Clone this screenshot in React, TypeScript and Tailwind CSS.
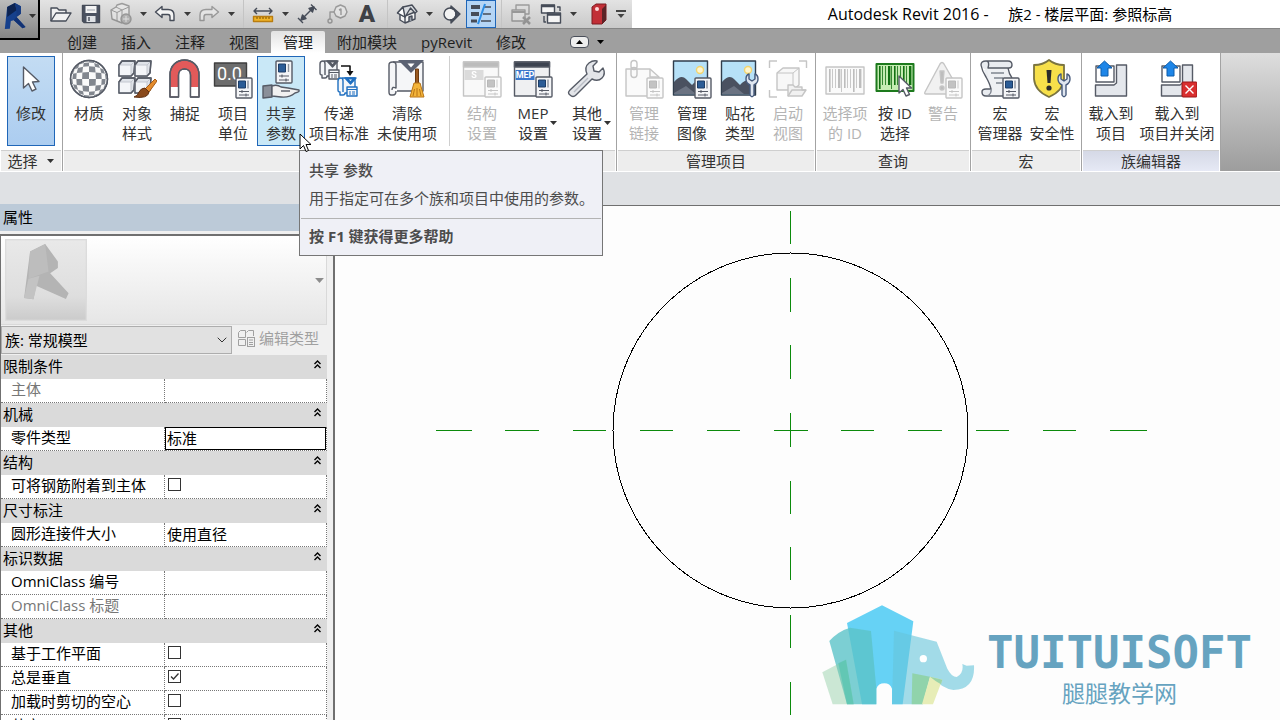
import React from 'react';
import clsx from 'clsx';
import { ChevronDown } from 'lucide-react';

interface IconProps {
  children: React.ReactNode;
  muted?: boolean;
}

const LINE = '#565b66';

/** 功能区大图标画布 40x40 */
const Big: React.FC<IconProps> = ({ children, muted }) => (
  <svg
    width="40"
    height="40"
    viewBox="0 0 40 40"
    fill="none"
    stroke={LINE}
    strokeWidth="1.4"
    strokeLinejoin="round"
    className={clsx('shrink-0', muted && 'opacity-35 grayscale')}
    aria-hidden="true"
  >
    {children}
  </svg>
);

/** 快速访问工具栏图标画布 24x24 */
const Small: React.FC<IconProps> = ({ children, muted }) => (
  <svg
    width="24"
    height="24"
    viewBox="0 0 24 24"
    fill="none"
    stroke="#464c58"
    strokeWidth="1.4"
    strokeLinejoin="round"
    className={clsx('shrink-0', muted && 'opacity-45 grayscale')}
    aria-hidden="true"
  >
    {children}
  </svg>
);

// 右下角的属性小面板
const Sheet: React.FC<{ x?: number; y?: number }> = ({ x = 23, y = 19 }) => (
  <g transform={`translate(${x} ${y})`}>
    <rect x="0" y="0" width="16" height="20" rx="1" fill="#f4f5f7" />
    <rect x="2.500" y="3" width="7" height="7" fill="#2b5c96" stroke="#1d3d66" strokeWidth="1" />
    <path d="M12 2.500v8" stroke="#8d939c" />
    <path d="M3 13.500h10M3 17h10M6 12v3M10 15.500v3" strokeWidth="1" />
  </g>
);

const SmallWrench = () => (
  <path
    transform="translate(26 15)"
    d="M4 21V11Q0 9 0 5Q0 1 3 0V5L6 7L9 5V0Q12 1 12 5Q12 9 8 11V21Q6 24.500 4 21Z"
    fill="#dfe6f0"
    stroke="#465a7c"
  />
);

// 棋盘格球体的网格点
const spherePoint = (i: number, j: number) => {
  const u = Math.sin(((i / 4 - 1) * Math.PI) / 2);
  const v = Math.sin(((j / 4 - 1) * Math.PI) / 2);
  const x = 20 + 18 * u * Math.sqrt(1 - (v * v) / 2);
  const y = 20 + 18 * v * Math.sqrt(1 - (u * u) / 2);
  return `${x.toFixed(1)},${y.toFixed(1)}`;
};

const sphereCells = Array.from({ length: 64 }, (_, n) => [n % 8, Math.floor(n / 8)])
  .filter(([i, j]) => (i + j) % 2 === 0)
  .map(([i, j]) =>
    [spherePoint(i, j), spherePoint(i + 1, j), spherePoint(i + 1, j + 1), spherePoint(i, j + 1)].join(' ')
  );

const CursorIcon = () => (
  <Big>
    <path d="M12.500 8V29L17.500 24.500L21 32L25 30.200L21.500 23L28 22.500Z" fill="#fff" />
  </Big>
);

const MaterialIcon = () => (
  <Big>
    <circle cx="20" cy="20" r="18.500" fill="#fafafa" />
    {sphereCells.map((points) => (
      <polygon key={points} points={points} fill="#82878f" stroke="none" />
    ))}
    <circle cx="20" cy="20" r="18.500" />
  </Big>
);

const StyleIcon = () => (
  <Big>
    {[[2, 2], [18, 2], [2, 19], [18, 19]].map(([x, y]) => (
      <g key={`${x}-${y}`} transform={`translate(${x} ${y})`}>
        <path d="M0 4L3 0H16L15 12L12 15H0Z" fill="#dfe3e9" />
        <path d="M0 4H12V15H0Z" fill="#f3f5f8" stroke="#c3c7cf" strokeWidth="1" />
        <path d="M12 4L16 0" stroke="#c3c7cf" strokeWidth="1" />
        <path d="M0 4L3 0H16L15 12L12 15H0Z" />
      </g>
    ))}
    <path d="M28 30L38 20L40 22L32 33Z" fill="#e38b2c" stroke="#a65b16" strokeWidth="1" />
    <path d="M17 38Q21 37 22 33Q24 29 28 29L32 33Q31 40 17 38Z" fill="#8a4a1c" stroke="#5f2f10" strokeWidth="1" />
  </Big>
);

const MagnetIcon = () => (
  <Big>
    <path d="M5 38V16C5 -4 34 -4 34 16V38H25.500V16C25.500 8 13.500 8 13.500 16V38Z" fill="#e25a5a" />
    <path d="M5.700 28H13V37.300H5.700ZM26 28H33.300V37.300H26Z" fill="#fff" stroke="none" />
    <path d="M5 38V16C5 -4 34 -4 34 16V38H25.500V16C25.500 8 13.500 8 13.500 16V38Z" />
  </Big>
);

const UnitsIcon = () => (
  <Big>
    <rect x="1.500" y="4" width="32" height="23" fill="#6d6d6d" stroke="#3f3f3f" />
    <text x="4" y="21" fontSize="18" fill="#fff" stroke="none" fontFamily="Roboto, sans-serif">
      0.0
    </text>
    <Sheet />
  </Big>
);

const ShareIcon = () => (
  <Big>
    <g transform="translate(15 2)">
      <rect width="16" height="22" rx="1" fill="#f4f5f7" />
      <rect x="2.500" y="3" width="7" height="8" fill="#2b5c96" stroke="#1d3d66" strokeWidth="1" />
      <path d="M12.500 3v8" stroke="#8d939c" />
      <path d="M3 15h10M3 19h10M6 13.500v3M10 17.500v3" strokeWidth="1.100" />
    </g>
    <path d="M2 27L11 26V38L2 39Z" fill="#8a8f99" />
    <path d="M11 27Q16 25 20 28L27 29L38 31Q39 33 34 34Q28 39 20 38L11 37Z" fill="#f1f1f1" />
    <path d="M20 32H29" />
  </Big>
);

const Scroll: React.FC<{ color?: string }> = ({ color = LINE }) => (
  <g stroke={color} fill="#f4f6f9">
    <path d="M5 2H18V17H8V17Q8 19 6 19H3V16Q1 16 1 14V5Q1 2 4 2Q6 2 6 5V16" />
    <path d="M8 2H19L13.500 8Z" fill={color} />
    <path d="M12 3.500H15L13.500 5Z" fill="#fff" stroke="none" />
    <rect x="10" y="11" width="10" height="9" />
    <path d="M10 13.500H20M12 16H14M15 16H18M12 18H14M15 18H18" strokeWidth="1" />
  </g>
);

const TransferIcon = () => (
  <Big>
    <Scroll />
    <g transform="translate(18 17)">
      <Scroll color="#1f6fc0" />
    </g>
    <path d="M22 7H31V13" stroke="#111" strokeWidth="1.600" />
    <path d="M27.500 12H34.500L31 17Z" fill="#111" stroke="none" />
  </Big>
);

const PurgeIcon = () => (
  <Big>
    <path d="M6 3H36V32H10" fill="#f5f6f8" />
    <path d="M9 32Q9 36 6 36H4Q2 36 2 33V6Q2 3 5.500 3Q9 3 9 6V29Q5 27 5 31" fill="#f5f6f8" />
    <path d="M11 1H37L24 14Z" fill="#5a6172" stroke="none" />
    <path d="M20.500 4.500H27.500L24 8.500Z" fill="#fff" stroke="none" />
    <path d="M28.500 10H31.500V25H28.500Z" fill="#9a5a22" stroke="#6d3b12" strokeWidth="1" />
    <path d="M27 24H33L37 38H23Z" fill="#f3b43a" stroke="#b87516" strokeWidth="1" />
    <path d="M27.500 30L26 37M30 29V37M32.500 30L34 37" stroke="#b87516" strokeWidth="1" />
  </Big>
);

const SettingsWindow: React.FC<{ tag: string; muted?: boolean }> = ({ tag, muted }) => (
  <Big muted={muted}>
    <rect x="1.500" y="3" width="35" height="34" fill="#eff0f2" />
    <rect x="1.500" y="3" width="35" height="5" fill="#3c4350" />
    <rect x="2.500" y="11" width="19" height="10" fill={muted ? '#9b9b9b' : '#3b78cc'} stroke="none" />
    <text
      x="12"
      y="19"
      fontSize="9"
      fontWeight="700"
      textAnchor="middle"
      fill="#fff"
      stroke="none"
      fontFamily="Roboto, sans-serif"
    >
      {tag}
    </text>
    <Sheet x={23} y={18} />
  </Big>
);

const WrenchIcon = () => (
  <Big>
    <path
      d="M3 31L20 15Q17 8 22 4Q26 1 30 2V3L26 7L27 12L32 13L36 9Q39 15 35 19Q31 23 25 20L9 36Q6 39 3 36Q0 34 3 31Z"
      fill="#e3e5e9"
    />
    <path d="M7 33L21 19" stroke="#b9bdc5" />
  </Big>
);

const LinkIcon = () => (
  <Big muted>
    <path d="M2 10H26L35 18V37H2Z" fill="#f2f2f2" />
    <path d="M26 10V18H35" />
    <rect x="7" y="1.500" width="6" height="9" rx="3" />
    <rect x="7" y="8.500" width="6" height="10" rx="3" />
    <Sheet />
  </Big>
);

const Landscape = () => (
  <>
    <rect x="1.500" y="2" width="34" height="34" fill="#b6e1f8" stroke="#2f3d4c" />
    <path d="M2 23Q9 15 14 20L20 26Q27 18 35 23V35H2Z" fill="#4a5160" stroke="none" />
    <path d="M2 34L14 27L24 35H2Z" fill="#6b7382" stroke="none" />
    <circle cx="28" cy="11" r="3.500" fill="#fff6cf" stroke="#f3d56f" />
  </>
);

const ImageIcon = () => (
  <Big>
    <Landscape />
    <Sheet />
  </Big>
);

const DecalIcon = () => (
  <Big>
    <Landscape />
    <SmallWrench />
  </Big>
);

const LaunchViewIcon = () => (
  <Big muted>
    <path d="M1.500 9V2H9M31 2H38.500V9M1.500 31V38H9" />
    <path d="M9 14L15 9H31V26L25 31H9Z" fill="#e9e9e9" />
    <path d="M9 14H25V31M25 14L31 9" strokeWidth="1" />
    <path d="M20 37V26H25L27 28H34V31H38L34 37Z" fill="#d9d9d9" />
    <path d="M20 37L24 31H38" />
  </Big>
);

const barWidths = [2, 1, 1, 3, 1, 2, 1, 1, 2, 1, 3];
const Bars: React.FC<{ color: string; y: number }> = ({ color, y }) => (
  <>
    {barWidths.map((w, i) => (
      <rect
        key={i}
        x={4 + i * 3}
        y={y}
        width={w * 0.8}
        height={i === 0 || i === 4 || i === 8 ? 23 : 19}
        fill={color}
        stroke="none"
      />
    ))}
  </>
);

const SelectIdsIcon = () => (
  <Big muted>
    <rect x="1" y="8" width="38" height="27" fill="#f1f1f1" />
    <Bars color="#444" y={10} />
  </Big>
);

const PickIdIcon = () => (
  <Big>
    <rect x="1.500" y="5" width="37" height="27" fill="#c5ecb2" stroke="#1d7a1d" strokeWidth="2" />
    <Bars color="#137013" y={7} />
    <path d="M24 17V34L28 30.500L31 37L34.500 35.500L31.500 29H36.500Z" fill="#fff" />
  </Big>
);

const WarningIcon = () => (
  <Big muted>
    <path d="M17 5Q19 2 21 5L37 33Q38 35 36 35H3Q1 35 2 33Z" fill="#d9d9d9" />
    <path d="M17 12H21L20 24H18Z" fill="#444" />
    <circle cx="19" cy="29" r="2" fill="#444" />
    <Sheet />
  </Big>
);

const MacroManagerIcon = () => (
  <Big>
    <path
      d="M5 2H28Q32 2 32 6Q32 9 29 9H13L20 26H30V37H5Q2 37 2 33Q2 30 5 30H10L4 11H6Q1 8 1 5Q1 2 5 2Z"
      fill="#e9ecf0"
      stroke="none"
    />
    <path d="M7 9H29V12L33 30V37H8Q11 36 11 32Q11 29 9 22Z" fill="#eef0f3" stroke="none" />
    <path d="M6 2H28Q32 2 32 6Q32 9 29 9H8Q10 2 6 2Q1 2 1 6Q2 12 6 18Q10 25 11 30H6Q2 30 2 33Q2 37 6 37H24M28 9Q29 15 32 19" />
    <path d="M11 14H24M14 19H23M16 24H22M11 30Q12 35 7 37" stroke="#7f8590" />
    <Sheet />
  </Big>
);

const MacroSecurityIcon = () => (
  <Big>
    <path d="M17 1Q23 6 32 6V20Q31 32 17 38Q3 32 2 20V6Q11 6 17 1Z" fill="#f7e04a" stroke="#7a7440" strokeWidth="1.800" />
    <path d="M14.500 11H19.500L18.500 24H15.500Z" fill="#2b2b2b" stroke="none" />
    <circle cx="17" cy="29" r="2.600" fill="#2b2b2b" stroke="none" />
    <SmallWrench />
  </Big>
);

const LoadShape: React.FC<{ closing?: boolean }> = ({ closing }) => (
  <Big>
    <path d="M5 7H23V23H5Z" fill="#fff" />
    <path d="M25.500 6H35.500V37H4.500V26H23L25.500 24Z" fill="#e4e7ec" />
    <path d="M13.500 2L21 9H17V17H10V9H6Z" fill="#1e86e8" stroke="#0d5cab" strokeWidth="1" />
    {closing && (
      <>
        <rect x="25" y="23" width="15" height="15" rx="1" fill="#d92f2f" stroke="#9c1919" strokeWidth="1" />
        <path d="M28.500 26.500L36.500 34.500M36.500 26.500L28.500 34.500" stroke="#fff" />
      </>
    )}
  </Big>
);

const Caret: React.FC<{ className?: string }> = ({ className }) => (
  <svg width="7" height="4" viewBox="0 0 7 4" className={className} aria-hidden="true">
    <path d="M0 0H7L3.500 4Z" fill="currentColor" />
  </svg>
);

interface ToolProps {
  icon: React.ReactNode;
  lines: string[];
  width?: string;
  disabled?: boolean;
  active?: string;
  menu?: boolean;
}

const Tool: React.FC<ToolProps> = ({ icon, lines, width = 'w-12', disabled, active, menu }) => (
  <button
    disabled={disabled}
    className={clsx(
      'flex h-[90px] shrink-0 flex-col items-center gap-1 border pt-0.5 leading-5',
      width,
      active ?? 'border-transparent',
      disabled ? 'text-[#b4b4b4]' : 'text-[#333]'
    )}
  >
    {icon}
    <span className={clsx('flex items-center gap-0.5 whitespace-nowrap', menu && 'pl-[9px]')}>
      <span>
        {lines.map((line) => (
          <span key={line} className="block">
            {line}
          </span>
        ))}
      </span>
      {menu && <Caret />}
    </span>
  </button>
);

interface PanelProps {
  title: string;
  children: React.ReactNode;
  padding?: string;
  tinted?: boolean;
  menu?: boolean;
}

const Panel: React.FC<PanelProps> = ({ title, children, padding = 'px-[3px]', tinted, menu }) => (
  <section className="flex shrink-0 flex-col border-r border-[#a3a3a3] bg-white">
    <div className={clsx('flex flex-1 pt-[3px]', padding)}>{children}</div>
    <h2
      className={clsx(
        'mx-px flex h-[21px] items-center justify-center gap-2 border-t border-[#cfcfcf] text-[#333]',
        tinted ? 'bg-linear-to-b from-[#d5d9e6] to-[#e6e9f5]' : 'bg-[#ededed]'
      )}
    >
      {title}
      {menu && <Caret className="w-[9px]" />}
    </h2>
  </section>
);

const Quick: React.FC<{ label: string; children: React.ReactNode; active?: boolean }> = ({
  label,
  children,
  active,
}) => (
  <button
    aria-label={label}
    className={clsx(
      'flex h-7 w-[30px] shrink-0 items-center justify-center',
      active && 'border border-[#1f66b8] bg-[#b5d5f5]'
    )}
  >
    {children}
  </button>
);

const QuickMenu: React.FC<{ label: string }> = ({ label }) => (
  <button aria-label={label} className="flex h-7 w-3.5 shrink-0 items-center justify-center text-[#3b3b3b]">
    <Caret />
  </button>
);

const QuickDivider = () => (
  <div className="flex h-7 w-2.5 shrink-0 justify-center">
    <div className="w-px bg-[#c4c4c4]" />
  </div>
);

const QuickAccess = () => (
  <div className="flex h-7 shrink-0 items-center bg-linear-to-b from-[#e3e3e3] to-[#c9c9c9] pr-1 pl-1.5">
    <Quick label="打开">
      <Small>
        <path d="M2 19V6H8L10 8H17V11" fill="#f1f1f1" />
        <path d="M2 19L7 11H22L17 19Z" fill="#f1f1f1" />
      </Small>
    </Quick>
    <Quick label="保存">
      <Small>
        <path d="M3.500 3.500H20.500V20.500H5L3.500 19Z" fill="#4b5261" />
        <rect x="6.500" y="4" width="11" height="7" fill="#f4f4f4" stroke="none" />
        <path d="M8 8H16" stroke="#9aa0aa" strokeWidth="1" />
        <rect x="7.500" y="14" width="9" height="6" fill="#dfe2e6" stroke="none" />
        <path d="M10 15V19" />
      </Small>
    </Quick>
    <Quick label="同步">
      <Small muted>
        <path d="M2 8L7 5L8 3L13 1.500L20 4V14L13 21L3 17Z" fill="#f0f0f0" />
        <path d="M2 8L8 10.500L13 8L20 5M8 10.500V19M13 8V19M7 5L13 8" strokeWidth="1" />
        <circle cx="17" cy="17" r="5" fill="#888" />
        <path d="M14 17H20M17 14V20" stroke="#eee" strokeWidth="1" />
      </Small>
    </Quick>
    <QuickMenu label="同步选项" />
    <Quick label="放弃">
      <Small>
        <path d="M9 4.500L2.500 10L9 15.500V12.500H15Q17 12.500 17 15V18.500H21V13Q21 7.500 15 7.500H9Z" fill="#f4f4f4" />
      </Small>
    </Quick>
    <QuickMenu label="放弃列表" />
    <Quick label="重做">
      <Small muted>
        <path d="M15 4.500L21.500 10L15 15.500V12.500H9Q7 12.500 7 15V18.500H3V13Q3 7.500 9 7.500H15Z" fill="#f4f4f4" />
      </Small>
    </Quick>
    <QuickMenu label="重做列表" />
    <QuickDivider />
    <Quick label="测量">
      <Small>
        <path d="M3 9H21M6 6L3 9L6 12M18 6L21 9L18 12" />
        <rect x="2.500" y="14.500" width="19" height="5" fill="#f0b429" stroke="#b97d10" />
        <path d="M6 15V17M9 15V17M12 15V17M15 15V17M18 15V17" stroke="#7a4f00" strokeWidth="1" />
      </Small>
    </Quick>
    <QuickMenu label="测量选项" />
    <Quick label="对齐尺寸标注">
      <Small>
        <path d="M7 17L18 6" />
        <path d="M6 18L7.500 13L11 16.500ZM19 5L17.500 10L14 6.500Z" fill="#464c58" />
        <path d="M3 16L8 21M16 2.500L21.500 8" />
      </Small>
    </Quick>
    <Quick label="按类别标记">
      <Small muted>
        <path d="M11 5L15.500 3L20 5L22 10L20 14L15.500 16L11 14L9 10Z" fill="#eee" />
        <path d="M14 8L16 7V13M9 10H5V17" />
        <circle cx="5" cy="19" r="2" />
      </Small>
    </Quick>
    <Quick label="文字">
      <span className="font-['Roboto',sans-serif] text-[24px] leading-6 font-black text-[#3f4146]">A</span>
    </Quick>
    <QuickDivider />
    <Quick label="默认三维视图">
      <Small>
        <path d="M5 11L10 14V21L5 18ZM10 14L20 10V17L10 21Z" fill="#f3f3f3" />
        <path d="M2.500 11L8 5L17 3L22 9.500L20 11L15.500 6L10 15Z" fill="#d9dce0" />
        <path d="M2.500 11L8 5L10 15Z" fill="#fff" />
        <path d="M14 19.500V15L17 14V18.500" fill="#9aa0aa" />
      </Small>
    </Quick>
    <QuickMenu label="三维视图选项" />
    <Quick label="剖面">
      <Small>
        <path d="M12 4L21 12L12 21Z" fill="#4b5261" />
        <circle cx="11" cy="12" r="6" fill="#f3f3f3" />
        <path d="M11 6A6 6 0 0 1 11 18" />
      </Small>
    </Quick>
    <Quick label="细线" active>
      <Small>
        <path d="M2 5H11M2 12H10" strokeWidth="4" />
        <path d="M2 19H8" strokeWidth="3" />
        <path d="M15 5H22M14 12H22M12 19H22" strokeWidth="1.500" />
        <path d="M16 2L9 22" stroke="#2b8de6" strokeWidth="2" />
      </Small>
    </Quick>
    <QuickDivider />
    <Quick label="关闭隐藏窗口">
      <Small muted>
        <path d="M7 8V3H20V12H16" />
        <path d="M3 8H16V19H3Z" fill="#e8e8e8" />
        <path d="M3 10H16" strokeWidth="2" />
        <path d="M14 15L21 22M21 15L14 22" strokeWidth="2.500" />
      </Small>
    </Quick>
    <Quick label="切换窗口">
      <Small>
        <rect x="2.500" y="3" width="13" height="8" fill="#f5f5f5" />
        <rect x="8.500" y="11" width="13" height="10" fill="#f5f5f5" />
        <path d="M2 4H16M8 12.500H22" strokeWidth="2.500" />
        <path d="M18 5H21V9M5 14V20H7" />
      </Small>
    </Quick>
    <QuickMenu label="窗口列表" />
    <div className="w-1" />
    <Quick label="插件">
      <Small>
        <path d="M5 5L9 2H19V18L15 22H5Z" fill="#c22f37" stroke="#7c1d23" strokeWidth="1" />
        <path d="M15 7L19 3V18L15 22Z" fill="#5c2327" stroke="none" />
        <circle cx="10" cy="7" r="2" fill="#ffd9d9" stroke="none" />
      </Small>
    </Quick>
    <button aria-label="自定义快速访问工具栏" className="flex h-7 w-3.5 flex-col items-center justify-center gap-0.5 text-[#444]">
      <span className="h-0.5 w-2.5 bg-[#444]" />
      <Caret className="w-2.5" />
    </button>
  </div>
);

const tabs = ['创建', '插入', '注释', '视图', '管理', '附加模块', 'pyRevit', '修改'];

const Header = () => (
  <header className="flex shrink-0 bg-[#9f9f9f]">
    <button
      aria-label="应用程序菜单"
      className="flex size-10 shrink-0 items-center justify-between border-r-2 border-b-2 border-black bg-linear-to-b from-[#bcbcbc] to-[#858585] pr-0.5 pb-1.5 pl-1 text-[#333]"
    >
      <svg width="23" height="28" viewBox="13 5 68 84" aria-hidden="true">
        <path d="M22 20L45 8L63 18V40L50 50L77 80L68 84L42 60L33 62L30 85L15 86Z" fill="#16408c" />
        <path d="M22 20L45 8L50 30L22 50Z" fill="#0d2350" />
        <path d="M45 8L63 18V40L50 50L50 30Z" fill="#153a80" />
        <path d="M42 60L50 50L77 80L68 84Z" fill="#123274" />
      </svg>
      <Caret />
    </button>
    <div className="flex min-w-0 flex-1 flex-col">
      <div className="flex bg-white">
        <QuickAccess />
        <h1 className="flex flex-1 items-center justify-center pr-[26px] pl-[114px] whitespace-pre text-black">
          <span className="text-base">Autodesk Revit 2016 -</span>
          {'     族2 - 楼层平面: 参照标高'}
        </h1>
      </div>
      <nav className="flex h-[25px] items-end border-t border-[#858585] pl-[15px]">
        {tabs.map((tab) => (
          <button
            key={tab}
            className={clsx(
              'h-[22px] px-3 leading-[22px] text-[#1e1e1e]',
              tab === '管理' && 'rounded-t-xs bg-linear-to-b from-[#e3e3e3] to-white'
            )}
          >
            {tab}
          </button>
        ))}
        <button aria-label="最小化功能区" className="ml-8 flex h-[22px] items-center gap-2 text-black">
          <span className="flex h-3 w-[19px] items-center justify-center rounded-sm border border-[#4a4f5a] bg-[#eee]">
            <Caret className="rotate-180" />
          </span>
          <Caret />
        </button>
      </nav>
    </div>
  </header>
);

const HelpTip = () => (
  <>
    <div
      role="tooltip"
      className="absolute top-[94px] left-[42px] z-10 h-[106px] w-[304px] border border-[#767676] bg-[#eff0f6] text-[#4c4c4c]"
    >
      <p className="px-[9px] pt-[7px] leading-6 font-medium">共享 参数</p>
      <p className="px-[9px] pt-1 leading-6 whitespace-nowrap">用于指定可在多个族和项目中使用的参数。</p>
      <p className="mx-px mt-2 border-t border-[#b3b3b3] px-2 pt-[5px] leading-6 font-bold">按 F1 键获得更多帮助</p>
    </div>
    <svg width="13" height="20" viewBox="0 0 13 20" className="absolute top-[77px] left-[42px] z-20" aria-hidden="true">
      <path d="M1 1V16L4.500 12.500L7 18.500L9.500 17.500L7 11.500H12Z" fill="#fff" stroke="#000" />
    </svg>
  </>
);

const Ribbon = () => (
  <div className="flex h-[119px] shrink-0 border-b border-white bg-linear-to-b from-[#dedede] to-[#9d9d9d]">
    <Panel title="选择" padding="px-[7px]" menu>
      <Tool icon={<CursorIcon />} lines={['修改']} active="border-[#1f66b8] bg-linear-to-b from-[#c3dcf3] to-[#accdf0]" />
    </Panel>
    <Panel title="" padding="px-0.5">
      <Tool icon={<MaterialIcon />} lines={['材质']} />
      <Tool icon={<StyleIcon />} lines={['对象', '样式']} />
      <Tool icon={<MagnetIcon />} lines={['捕捉']} />
      <Tool icon={<UnitsIcon />} lines={['项目', '单位']} />
      <div className="relative">
        <Tool icon={<ShareIcon />} lines={['共享', '参数']} active="border-[#1f66b8] bg-[#c9e8f7]" />
        <HelpTip />
      </div>
      <Tool icon={<TransferIcon />} lines={['传递', '项目标准']} width="w-[68px]" />
      <Tool icon={<PurgeIcon />} lines={['清除', '未使用项']} width="w-[68px]" />
      <div className="mx-2 h-[90px] w-px bg-[#cfcfcf]" />
      <Tool icon={<SettingsWindow tag="S" muted />} lines={['结构', '设置']} disabled />
      <Tool icon={<SettingsWindow tag="MEP" />} lines={['MEP', '设置']} width="w-[54px]" menu />
      <Tool icon={<WrenchIcon />} lines={['其他', '设置']} width="w-[54px]" menu />
    </Panel>
    <Panel title="管理项目">
      <Tool icon={<LinkIcon />} lines={['管理', '链接']} disabled />
      <Tool icon={<ImageIcon />} lines={['管理', '图像']} />
      <Tool icon={<DecalIcon />} lines={['贴花', '类型']} />
      <Tool icon={<LaunchViewIcon />} lines={['启动', '视图']} disabled />
    </Panel>
    <Panel title="查询">
      <Tool icon={<SelectIdsIcon />} lines={['选择项', '的 ID']} width="w-[52px]" disabled />
      <Tool icon={<PickIdIcon />} lines={['按 ID', '选择']} />
      <Tool icon={<WarningIcon />} lines={['警告']} disabled />
    </Panel>
    <Panel title="宏">
      <Tool icon={<MacroManagerIcon />} lines={['宏', '管理器']} width="w-[52px]" />
      <Tool icon={<MacroSecurityIcon />} lines={['宏', '安全性']} width="w-[52px]" />
    </Panel>
    <Panel title="族编辑器" tinted>
      <Tool icon={<LoadShape />} lines={['载入到', '项目']} width="w-[52px]" />
      <Tool icon={<LoadShape closing />} lines={['载入到', '项目并关闭']} width="w-20" />
    </Panel>
  </div>
);

interface PropertyRow {
  label: string;
  kind?: 'text' | 'check';
  value?: string;
  checked?: boolean;
  disabled?: boolean;
  focused?: boolean;
}

const groups: { title: string; rows: PropertyRow[] }[] = [
  { title: '限制条件', rows: [{ label: '主体', disabled: true }] },
  { title: '机械', rows: [{ label: '零件类型', value: '标准', focused: true }] },
  { title: '结构', rows: [{ label: '可将钢筋附着到主体', kind: 'check' }] },
  { title: '尺寸标注', rows: [{ label: '圆形连接件大小', value: '使用直径' }] },
  { title: '标识数据', rows: [{ label: 'OmniClass 编号' }, { label: 'OmniClass 标题', disabled: true }] },
  {
    title: '其他',
    rows: [
      { label: '基于工作平面', kind: 'check' },
      { label: '总是垂直', kind: 'check', checked: true },
      { label: '加载时剪切的空心', kind: 'check' },
      { label: '共享', kind: 'check' },
    ],
  },
];

const PropertyValue: React.FC<{ row: PropertyRow }> = ({ row }) => {
  if (row.kind === 'check') {
    return (
      <span className="relative flex size-[13px]">
        <input
          id={row.label}
          type="checkbox"
          defaultChecked={row.checked}
          className="peer size-[13px] appearance-none border border-[#333] bg-white"
        />
        <svg
          viewBox="0 0 13 13"
          className="pointer-events-none absolute inset-0 hidden peer-checked:block"
          fill="none"
          stroke="#333"
          strokeWidth="1.3"
          aria-hidden="true"
        >
          <path d="M3 6.500L5.500 9L10.500 3.500" />
        </svg>
      </span>
    );
  }
  return (
    <input
      id={row.label}
      type="text"
      defaultValue={row.value}
      disabled={row.disabled}
      className={clsx(
        'block h-[23px] w-full border px-px pb-[3px] text-black',
        row.focused ? 'border-black' : 'border-transparent'
      )}
    />
  );
};

const PropertyTable = () => (
  <table className="w-full table-fixed border-separate border-spacing-0">
    <colgroup>
      <col className="w-[164px]" />
      <col />
    </colgroup>
    {groups.map((group) => (
      <tbody key={group.title}>
        <tr>
          <th colSpan={2} className="h-6 bg-[#dadada] p-0 text-left font-normal text-black">
            <button className="flex h-6 w-full items-center justify-between pr-1.5 pb-0.5 pl-0.5">
              {group.title}
              <svg width="7" height="9" viewBox="0 0 7 9" fill="none" stroke="#000" strokeWidth="1.4" className="mb-1" aria-hidden="true">
                <path d="M0.500 4L3.500 1L6.500 4M0.500 8L3.500 5L6.500 8" />
              </svg>
            </button>
          </th>
        </tr>
        {group.rows.map((row) => (
          <tr key={row.label}>
            <td
              className={clsx(
                'h-6 border-r border-b border-dotted border-[#777] bg-white p-0 pl-2.5 whitespace-nowrap',
                row.disabled ? 'text-[#777]' : 'text-black'
              )}
            >
              <label htmlFor={row.label} className="block h-[23px] leading-5">
                {row.label}
              </label>
            </td>
            <td
              className={clsx(
                'h-6 border-r border-b border-dotted border-[#777] bg-white p-0',
                row.kind === 'check' && 'pb-1 pl-[3px]'
              )}
            >
              <PropertyValue row={row} />
            </td>
          </tr>
        ))}
      </tbody>
    ))}
  </table>
);

const Properties = () => (
  <aside className="flex w-[335px] shrink-0 flex-col overflow-hidden border-r-2 border-[#707070] bg-[#f0f0f0]">
    <h2 className="h-[27px] shrink-0 bg-[#bccad8] pl-[3px] leading-[27px] text-black">属性</h2>
    <div className="mt-[3px] flex min-h-0 flex-1 flex-col border-t-2 border-l border-[#707070] pr-1.5">
      <button
        aria-label="类型选择器"
        className="flex h-[89px] shrink-0 items-center justify-between border-r border-b border-[#d9d9d9] bg-linear-to-b from-white to-[#e6e6e6] pr-0.5 pl-1 text-[#8c8c8c]"
      >
        <svg width="82" height="82" viewBox="15 178 245 245" aria-hidden="true">
          <defs>
            <linearGradient id="thumb" x1="0" y1="0" x2="0" y2="1">
              <stop offset="0" stopColor="#e9e9e9" />
              <stop offset="0.7" stopColor="#dedede" />
              <stop offset="1" stopColor="#cbcbcb" />
            </linearGradient>
          </defs>
          <rect x="17" y="180" width="241" height="241" fill="url(#thumb)" stroke="#dcdcdc" strokeWidth="4" />
          <path d="M90 215L135 193L173 245V265L150 280L205 340L197 357L108 318L100 358L72 354Z" fill="#b4b4b4" />
          <path d="M90 215L135 193L145 275L85 297Z" fill="#bdbdbd" />
          <path d="M85 297L118 288L100 358L72 354Z" fill="#c3c3c3" />
        </svg>
        <Caret className="h-[5px] w-[9px]" />
      </button>
      <div className="flex h-[30px] shrink-0 items-center">
        <div className="relative w-[231px]">
          <select
            aria-label="族类型"
            defaultValue="generic"
            className="block h-7 w-full appearance-none border border-[#adadad] bg-[#e1e1e1] pl-[3px] text-black"
          >
            <option value="generic">族: 常规模型</option>
          </select>
          <ChevronDown size={16} strokeWidth={1.5} className="pointer-events-none absolute top-1.5 right-0.5 text-[#333]" />
        </div>
        <button disabled className="flex items-center gap-1 pb-[3px] pl-1.5 whitespace-nowrap text-[#a0a0a0]">
          <svg width="17" height="17" viewBox="0 0 17 17" fill="none" stroke="#a0a0a0" aria-hidden="true">
            <path d="M0.500 2.500L2.500 0.500H7.500V7.500H0.500ZM8.500 2.500L10.500 0.500H15.500V6M0.500 9.500H7.500V15.500H0.500Z" />
            <rect x="9.500" y="7.500" width="7" height="9" />
            <path d="M11 10H15M11 12.500H15M11 14.500H15" />
          </svg>
          编辑类型
        </button>
      </div>
      <PropertyTable />
    </div>
  </aside>
);

// 参照平面的虚线段
const hDashes = [[100, 136], [169, 203], [237, 270], [304, 337], [371, 404], [438, 472], [505, 538], [572, 606], [640, 673], [707, 740], [774, 811]];
const vDashes = [[5, 38], [72, 106], [139, 173], [207, 241], [275, 308], [341, 374], [409, 442], [476, 509]];

const Watermark = () => (
  <div className="absolute top-[399px] left-[487px] flex items-start gap-3 text-[#66a3c0]">
    <svg width="153" height="100" viewBox="36 44 459 300" aria-hidden="true">
      <path d="M111 98L216 45L310 93L278 342H246V295Q240 279 223 279Q205 279 199 295V342H156Z" fill="#66d2f5" />
      <path d="M58 152Q85 122 120 112L183 122L199 295V342H111Z" fill="#5bc3c8" fillOpacity="0.8" />
      <path d="M37 246L108 208L131 342H68Z" fill="#8fcda2" fillOpacity="0.45" />
      <path d="M85 219L108 208L131 342H111Z" fill="#54c4b0" fillOpacity="0.7" />
      <path
        d="M252 121L380 154L412 235Q425 260 440 260Q462 250 457 221L470 226L492 225Q496 298 430 299Q402 296 360 259L338 342H246Z"
        fill="#66c4da"
        fillOpacity="0.6"
      />
      <path d="M307 249L360 259L338 342H305Z" fill="#8cd19b" fillOpacity="0.8" />
      <path d="M360 259L397 268L369 342H336Z" fill="#e7edb7" />
      <path d="M360 259L397 268L393 282Q378 274 360 259Z" fill="#9bd4a8" />
      <circle cx="340" cy="205" r="11" fill="#fff" />
    </svg>
    <div className="flex flex-col items-center pt-[22px]">
      <span className="font-['DejaVu_Sans_Mono',monospace] text-[44px] leading-[52px] font-bold">TUITUISOFT</span>
      <span className="text-[23px] leading-7">腿腿教学网</span>
    </div>
  </div>
);

const Canvas = () => (
  <main className="relative mt-px min-w-0 flex-1 overflow-hidden border-t border-[#707070] bg-[#fdfdfd]">
    <svg width="944" height="514" viewBox="0 0 944 514" fill="none" shapeRendering="crispEdges" role="img" aria-label="参照标高视图">
      <circle cx="455.500" cy="224.500" r="177.500" stroke="#000" />
      <g fill="#0b8a0b">
        {hDashes.map(([start, end]) => (
          <rect key={start} x={start + 1} y={224} width={end - start} height={1} />
        ))}
        {vDashes.map(([start, end]) => (
          <rect key={start} x={455} y={start} width={1} height={end - start} />
        ))}
      </g>
    </svg>
    <Watermark />
  </main>
);

export default function App() {
  return (
    <div className="flex h-screen flex-col overflow-hidden bg-[#dfe1e4] font-['Open_Sans','Noto_Sans_CJK_SC',sans-serif] text-[15px]">
      <Header />
      <Ribbon />
      <div className="h-8 shrink-0" />
      <div className="flex min-h-0 flex-1">
        <Properties />
        <Canvas />
      </div>
    </div>
  );
}
